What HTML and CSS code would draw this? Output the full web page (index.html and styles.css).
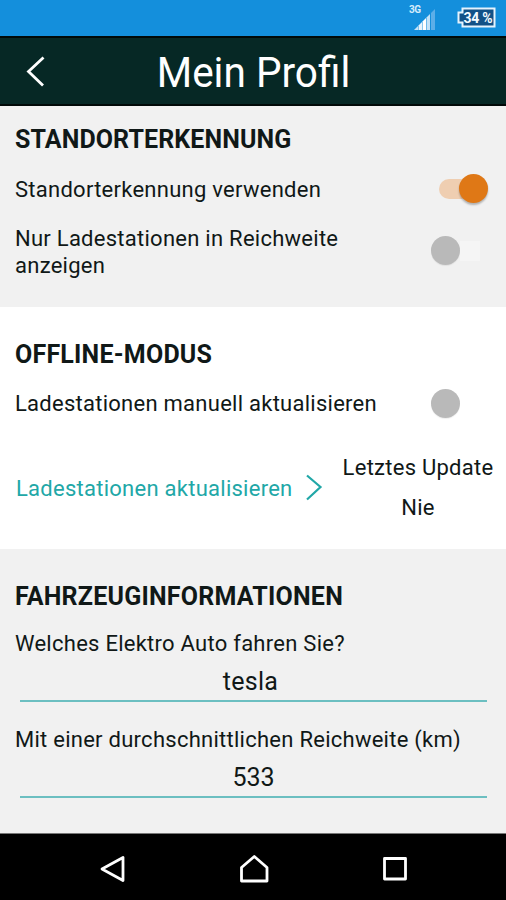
FILE: index.html
```html
<!DOCTYPE html>
<html lang="de">
<head>
<meta charset="utf-8">
<title>Mein Profil</title>
<link rel="stylesheet" href="styles.css">
</head>
<body>
<div class="statusbar">
  <svg class="signal" width="28" height="28" viewBox="0 0 28 28">
    <text class="network" x="0" y="8.500" textLength="12">3G</text>
    <path d="M5 26l4-4v4z" fill="#c5e2f7"/>
    <path d="M9.500 21.500L13 18v8H9.500z" fill="#e8f4fd"/>
    <path d="M13.500 17.500l3.500-3.500v12h-3.500z" fill="#fff"/>
    <path d="M17.500 13.500l3.500-3.500v16h-3.500z" fill="#c4e2f7"/>
    <path d="M22 9l4-4v21h-4z" fill="#5caee8"/>
  </svg>
  <svg class="battery" width="40" height="22" viewBox="0 0 40 22">
    <path d="M5.500 1.500h32v18h-32v-4h-4v-10h4z" fill="#125187" stroke="#e5f3fd" stroke-width="2"/>
    <text class="percent" x="6.500" y="15.500" textLength="29">34 %</text>
  </svg>
</div>
<header class="appbar">
  <svg class="back" width="24" height="34" viewBox="0 0 24 34"><path d="M21.500 3.500L6.500 17.500l14.500 14" fill="none" stroke="#fff" stroke-width="2.800"/></svg>
  <h1 class="title">Mein Profil</h1>
</header>
<main>
  <section class="section location">
    <h2>STANDORTERKENNUNG</h2>
    <div class="row"><span class="label">Standorterkennung verwenden</span><span class="switch on"></span></div>
    <div class="row tall"><span class="label">Nur Ladestationen in Reichweite<br>anzeigen</span><span class="switch"></span></div>
  </section>
  <section class="section offline">
    <h2>OFFLINE-MODUS</h2>
    <div class="row"><span class="label">Ladestationen manuell aktualisieren</span><span class="switch"></span></div>
    <div class="update">
      <a class="link">Ladestationen aktualisieren<svg width="18" height="28" viewBox="0 0 18 28"><path d="M2 1.500L15.500 13L2 25.500" fill="none" stroke="#21a7a7" stroke-width="2.200"/></svg></a>
      <div class="last"><span>Letztes Update</span><span class="never">Nie</span></div>
    </div>
  </section>
  <section class="section vehicle">
    <h2>FAHRZEUGINFORMATIONEN</h2>
    <div class="question">Welches Elektro Auto fahren Sie?</div>
    <div class="field">tesla</div>
    <div class="question second">Mit einer durchschnittlichen Reichweite (km)</div>
    <div class="field number">533</div>
  </section>
</main>
<nav class="navbar">
  <svg width="30" height="30" viewBox="0 0 30 30"><path d="M25 3.500v23L4 15z"/></svg>
  <svg width="30" height="30" viewBox="0 0 30 30"><path d="M2.500 13.500L15.300 2.500l12.700 11v13.500H2.500z"/></svg>
  <svg width="30" height="30" viewBox="0 0 30 30"><path d="M4.500 4.500h21v20.500h-21z"/></svg>
</nav>
</body>
</html>
```
FILE: styles.css
```css
* { box-sizing: border-box; }
body {
  margin: 0;
  width: 506px;
  height: 900px;
  overflow: hidden;
  display: flex;
  flex-direction: column;
  font-family: Roboto, sans-serif;
  font-size: 22px;
  letter-spacing: 0.26px;
  color: #101817;
  background: #f1f1f1;
}
.statusbar {
  height: 36px;
  display: flex;
  justify-content: flex-end;
  gap: 20px;
  padding: 4px 9px 0 0;
  background: #148fdc;
}
.battery { margin-top: 3px; }
.network { font-size: 10px; font-weight: 700; letter-spacing: 0; fill: #d5ecfb; }
.percent { font-size: 14px; font-weight: 700; letter-spacing: 0; fill: #f3faff; }
.appbar {
  height: 70px;
  display: grid;
  grid-template-columns: 36px 1fr 36px;
  align-items: center;
  padding: 0 21px 0 22px;
  border-top: 2px solid #000908;
  border-bottom: 2px solid #000908;
  background: #062825;
}
.title {
  margin: 3px 0 0;
  text-align: center;
  font-size: 42px;
  font-weight: 400;
  line-height: 48px;
  letter-spacing: 0;
  color: #fff;
  transform: scaleX(0.965);
}
.section { padding: 0 15px; }
.location { height: 200.5px; padding-top: 19px; }
.offline { height: 242.5px; padding-top: 33px; background: #fff; }
.vehicle { height: 284px; padding-top: 33px; }
h2 {
  margin: 0;
  height: 30px;
  font-size: 25px;
  font-weight: 700;
  line-height: 30px;
  letter-spacing: 0.1px;
}
.offline h2, .vehicle h2 { letter-spacing: 0.22px; }
.row {
  height: 28px;
  margin-top: 20px;
  display: flex;
  justify-content: space-between;
  align-items: center;
}
.label { line-height: 27px; white-space: nowrap; }
.row.tall { height: 54px; margin-top: 22px; }
.switch {
  flex: none;
  width: 58px;
  height: 28px;
  margin: -1px 2px 0 0;
  display: flex;
  align-items: center;
}
.row.tall .switch { margin-top: -3px; }
.switch::before {
  content: "";
  width: 29px;
  height: 29px;
  border-radius: 50%;
  background: #b9b9b9;
  box-shadow: 0 1px 1px #0001;
}
.switch::after {
  content: "";
  width: 20px;
  height: 20px;
  background: #f5f5f5;
}
.offline .switch::after { background: #fff; }
.switch.on { flex-direction: row-reverse; margin-right: 3px; }
.switch.on::before { position: relative; z-index: 1; background: #df7816; box-shadow: 0 2px 2px #0004; }
.switch.on::after { height: 20px; width: 32px; margin-right: -12px; border-radius: 10px; background: #efceb1; }
.update { display: flex; justify-content: space-between; margin-top: 36px; height: 66px; }
.link { display: flex; align-items: center; gap: 12px; padding: 3px 0 0 1px; color: #21a7a7; white-space: nowrap; }
.last { width: 152px; margin-right: -3px; text-align: center; white-space: nowrap; }
.last span { display: block; line-height: 28px; }
.last .never { margin-top: 12px; }
.question { height: 28px; margin-top: 18px; line-height: 28px; white-space: nowrap; }
.question.second { margin-top: 24px; }
.field {
  margin: 0 4px 0 5px;
  height: 44px;
  line-height: 47px;
  padding: 0 6px 2px 0;
  text-align: center;
  font-size: 25px;
  border-bottom: 2px solid #6cbfc1;
}
.field.number { line-height: 48px; padding-right: 0; letter-spacing: 0; }
.navbar {
  flex: 1;
  display: flex;
  justify-content: center;
  align-items: center;
  gap: 111px;
  padding: 3px 0 0 1px;
  background: #000;
  border-top: 1px solid #777;
}
.navbar path { fill: none; stroke: #fff; stroke-width: 2.8; stroke-linejoin: round; }
```
